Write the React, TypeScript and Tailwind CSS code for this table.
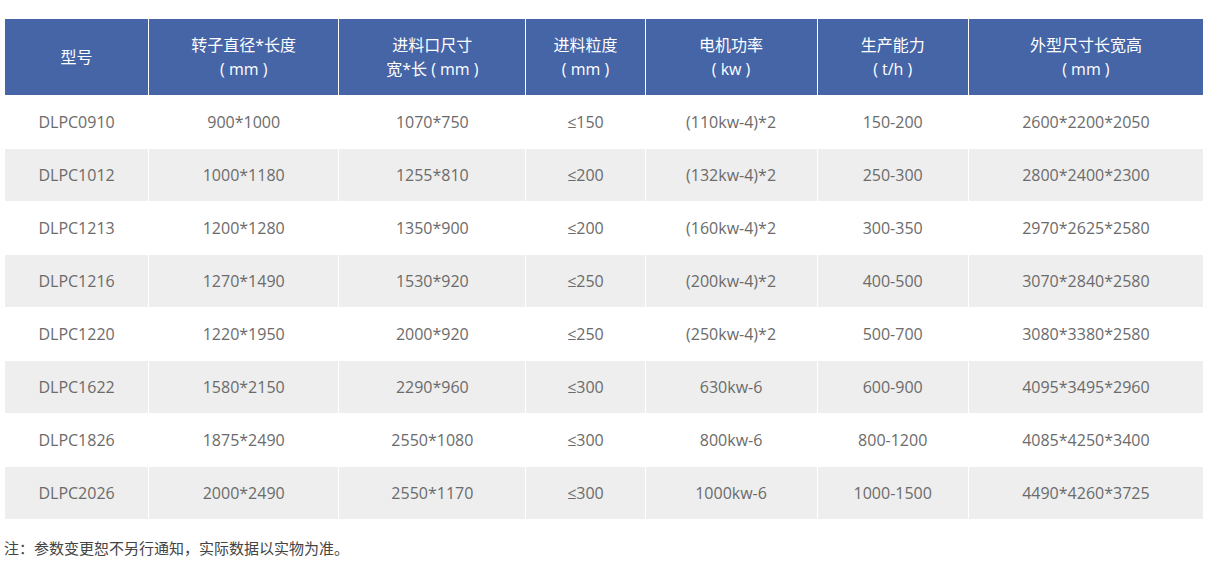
import React from "react";

const font = {fontFamily: '"Open Sans", "Noto Sans CJK SC", sans-serif'};

const head = [
  ["型号"],
  ["转子直径*长度", "( mm )"],
  ["进料口尺寸", "宽*长 ( mm )"],
  ["进料粒度", "( mm )"],
  ["电机功率", "( kw )"],
  ["生产能力", "( t/h )"],
  ["外型尺寸长宽高", "( mm )"],
];

const widths = ["w-[144px]", "w-[190px]", "w-[187px]", "w-[119px]", "w-[172px]", "w-[151px]", "w-[235px]"];

const rows = [
  ["DLPC0910", "900*1000", "1070*750", "≤150", "(110kw-4)*2", "150-200", "2600*2200*2050"],
  ["DLPC1012", "1000*1180", "1255*810", "≤200", "(132kw-4)*2", "250-300", "2800*2400*2300"],
  ["DLPC1213", "1200*1280", "1350*900", "≤200", "(160kw-4)*2", "300-350", "2970*2625*2580"],
  ["DLPC1216", "1270*1490", "1530*920", "≤250", "(200kw-4)*2", "400-500", "3070*2840*2580"],
  ["DLPC1220", "1220*1950", "2000*920", "≤250", "(250kw-4)*2", "500-700", "3080*3380*2580"],
  ["DLPC1622", "1580*2150", "2290*960", "≤300", "630kw-6", "600-900", "4095*3495*2960"],
  ["DLPC1826", "1875*2490", "2550*1080", "≤300", "800kw-6", "800-1200", "4085*4250*3400"],
  ["DLPC2026", "2000*2490", "2550*1170", "≤300", "1000kw-6", "1000-1500", "4490*4260*3725"],
];

export default function App() {
  return (
    <div className="w-[1221px] h-[562px] bg-white pt-[18px] pl-[4px]" style={font}>
      <table className="w-[1200px] border-collapse table-fixed">
        <thead>
          <tr className="h-[77px] bg-[#4565a7]">
            {head.map((h, i) => (
              <th key={i} className={`${widths[i]} border border-white text-center text-[16px] font-normal leading-[24px] text-white`}>
                {h.map((l, j) => (
                  <div key={j} className="whitespace-pre">{l}</div>
                ))}
              </th>
            ))}
          </tr>
        </thead>
        <tbody>
          {rows.map((r, i) => (
            <tr key={i} className={`h-[53px] ${i % 2 === 1 ? "bg-[#eeeeee]" : "bg-white"}`}>
              {r.map((c, j) => (
                <td key={j} className="border border-white text-center text-[16px] text-[#6b6b6b]">
                  {c}
                </td>
              ))}
            </tr>
          ))}
        </tbody>
      </table>
      <p className="mt-[17px] text-[15px] text-[#444444]">注：参数变更恕不另行通知，实际数据以实物为准。</p>
    </div>
  );
}
